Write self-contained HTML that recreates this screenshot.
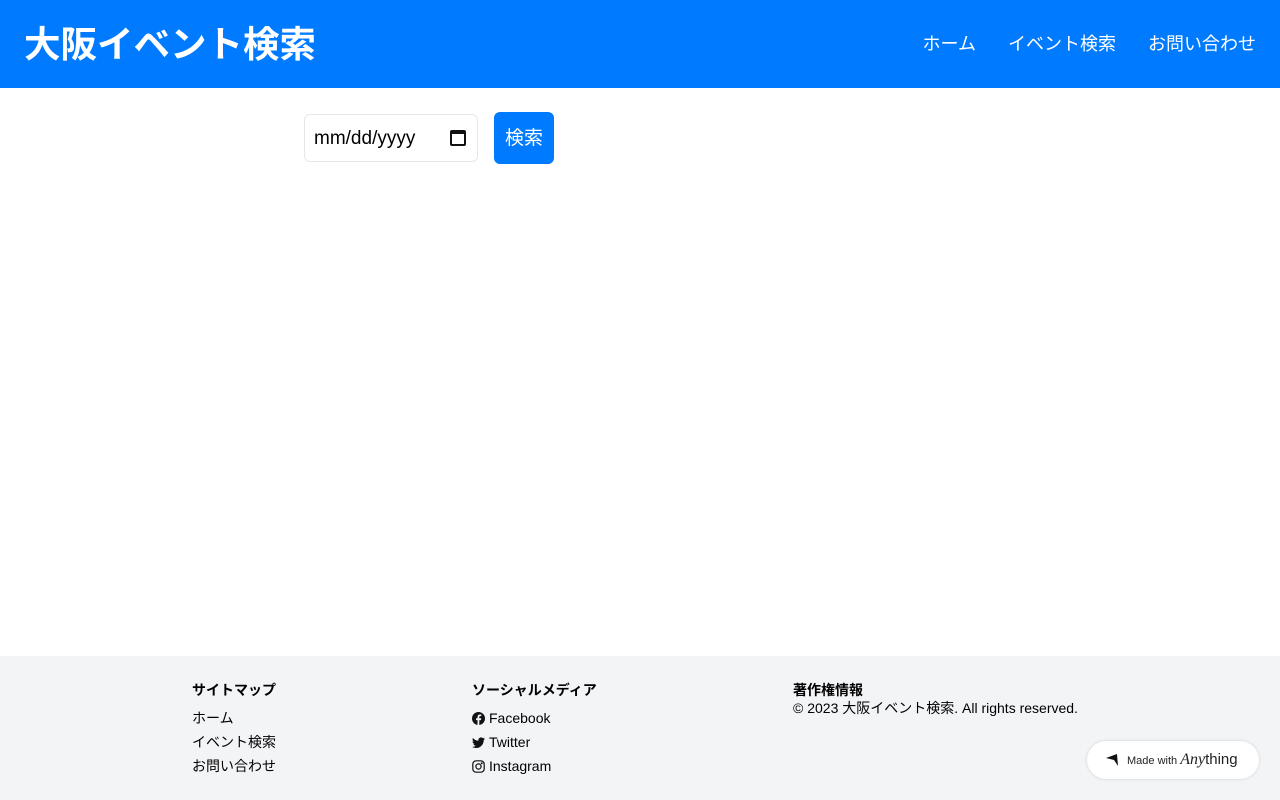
<!DOCTYPE html>
<html><head><meta charset="utf-8"><style>
*{box-sizing:border-box;margin:0;padding:0}
body{width:1280px;height:800px;position:relative;font-family:"Liberation Sans","Noto Sans CJK JP",sans-serif;background:#fff;overflow:hidden}
header{height:88px;background:#007bff;color:#fff;position:relative}
header h1{position:absolute;left:24px;top:23px;font-size:36.5px;line-height:44px;font-weight:bold}
nav{position:absolute;right:24px;top:32px;font-size:18px;line-height:24px}
nav span{margin-left:32px}
.date{position:absolute;left:304px;top:114px;width:174px;height:48px;border:1px solid #e5e7eb;border-radius:6px;font-size:19px;line-height:48px;padding-left:9px;color:#000}
.cal{position:absolute;right:11px;top:15px;width:16px;height:16px;border:2px solid #111;border-top-width:4px;border-radius:2px}
.btn{position:absolute;left:494px;top:112px;width:60px;height:52px;background:#007bff;color:#fff;border-radius:6px;font-size:19px;line-height:54px;text-align:center}
footer{position:absolute;left:0;top:656px;width:1280px;height:144px;background:#f3f4f6;font-size:14px;color:#000}
.col{position:absolute;top:26px;line-height:24px}
.col b{display:block;line-height:16px;margin-bottom:8px}
.col svg{vertical-align:-2px;margin-right:4px}
.badge{position:absolute;left:1087px;top:741px;width:172px;height:38px;background:#fff;border-radius:19px;box-shadow:0 0 3px rgba(0,0,0,.15);font-size:11px;color:#222;line-height:38px;padding-left:40px}
.badge i{font-family:"Liberation Serif",serif;font-size:16px}
</style></head><body>
<header><h1>大阪イベント検索</h1><nav><span>ホーム</span><span>イベント検索</span><span>お問い合わせ</span></nav></header>
<div class="date">mm/dd/yyyy<div class="cal"></div></div>
<div class="btn">検索</div>
<footer>
<div class="col" style="left:192px"><b>サイトマップ</b>ホーム<br>イベント検索<br>お問い合わせ</div>
<div class="col" style="left:472px"><b>ソーシャルメディア</b><svg width="13" height="13" viewBox="0 0 16 16"><circle cx="8" cy="8" r="8" fill="#111"/><path d="M9 16V10h2l.4-2.3H9V6.3c0-.7.3-1.2 1.3-1.2h1.2V3.1c-.4 0-1.1-.1-1.800-.1-1.8 0-2.9 1-2.9 3v1.7H5V10h1.8v6z" fill="#f3f4f6"/></svg>Facebook<br><svg width="13" height="12" viewBox="0 0 16 14"><path d="M16 1.7a6.5 6.5 0 0 1-1.9.5A3.3 3.3 0 0 0 15.6.4a6.6 6.6 0 0 1-2.1.8A3.3 3.3 0 0 0 7.9 4.2 9.3 9.3 0 0 1 1.1.8a3.3 3.3 0 0 0 1 4.4 3.3 3.3 0 0 1-1.5-.4 3.3 3.3 0 0 0 2.6 3.2 3.3 3.3 0 0 1-1.5.1 3.3 3.3 0 0 0 3.1 2.3A6.6 6.6 0 0 1 0 11.7 9.3 9.3 0 0 0 5 13.2c6 0 9.4-5 9.4-9.4v-.4A6.7 6.7 0 0 0 16 1.7z" fill="#111"/></svg>Twitter<br><svg width="13" height="13" viewBox="0 0 16 16" fill="none" stroke="#111" stroke-width="1.5"><rect x="1" y="1" width="14" height="14" rx="4"/><circle cx="8" cy="8" r="3.2"/><circle cx="12" cy="4" r=".5" fill="#111"/></svg>Instagram</div>
<div class="col" style="left:793px;line-height:20px"><b style="margin:0">著作権情報</b>© 2023 大阪イベント検索. All rights reserved.</div>
</footer>
<div class="badge"><svg style="position:absolute;left:18px;top:12px" width="14" height="14" viewBox="0 0 14 14"><path d="M1 5L12 1L13 13L9 7Z" fill="#111"/></svg>Made with <i>Any</i><span style="font-size:15px">thing</span></div>
</body></html>
